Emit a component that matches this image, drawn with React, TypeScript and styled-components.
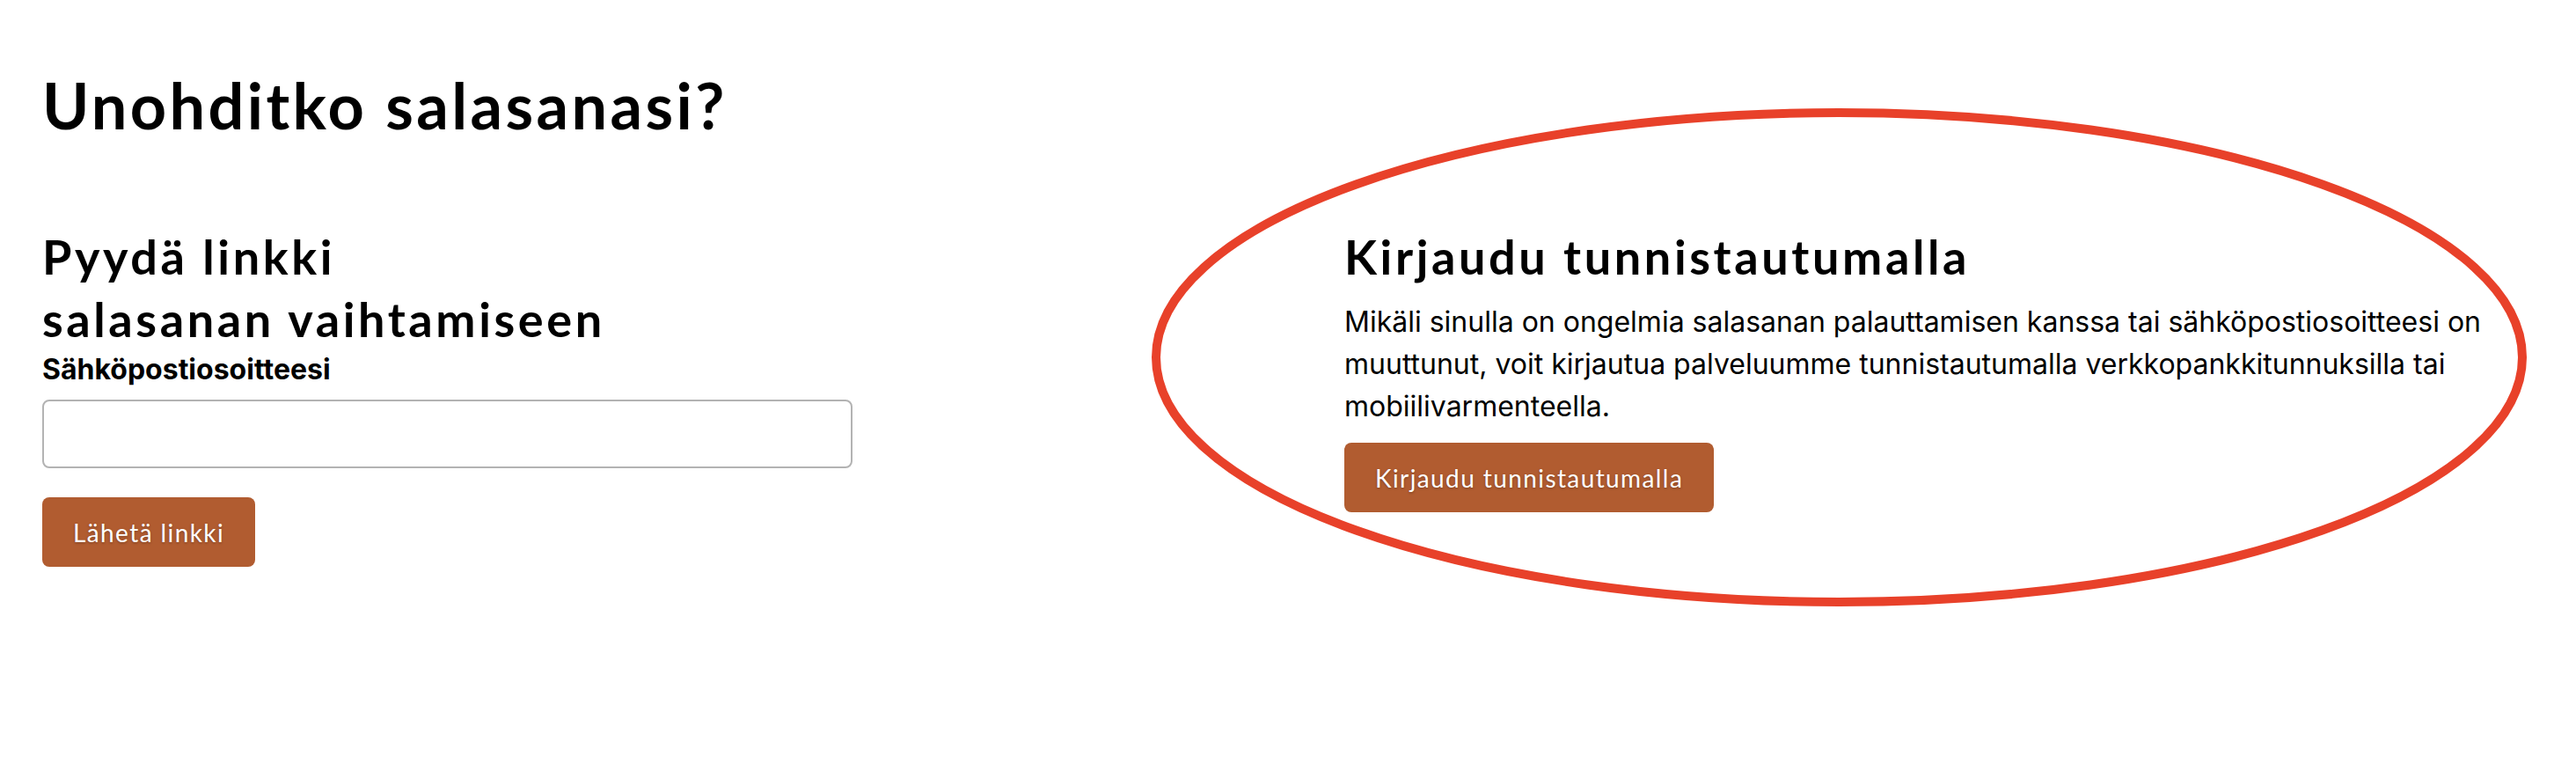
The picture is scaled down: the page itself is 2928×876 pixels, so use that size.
import React from 'react';
import styled, { createGlobalStyle } from 'styled-components';

const GlobalStyle = createGlobalStyle`
  html, body {
    margin: 0;
    padding: 0;
    background: #ffffff;
  }
  body {
    font-family: Inter, "Liberation Sans", sans-serif;
    color: #000000;
  }
  * {
    box-sizing: border-box;
  }
`;

const Page = styled.main`
  position: relative;
  width: 2928px;
  min-height: 876px;
  padding: 76px 48px 0 48px;
`;

const Title = styled.h1`
  margin: 0 0 94px 0;
  font-family: Lato, "Noto Sans", sans-serif;
  font-weight: 700;
  font-size: 72px;
  line-height: 1.2;
  letter-spacing: 3.4px;
`;

const Columns = styled.div`
  display: grid;
  grid-template-columns: 1fr 1fr;
  column-gap: 128px;
`;

const Column = styled.section`
  display: flex;
  flex-direction: column;
  align-items: flex-start;
`;

const Heading = styled.h2<{ $space?: number }>`
  margin: 0 0 ${({ $space }) => $space ?? 0}px 0;
  font-family: Lato, "Noto Sans", sans-serif;
  font-weight: 700;
  font-size: 54px;
  line-height: 71px;
  letter-spacing: 3.6px;
`;

const Form = styled.form`
  display: flex;
  flex-direction: column;
  align-items: flex-start;
`;

const Label = styled.label`
  font-family: Inter, "Liberation Sans", sans-serif;
  font-weight: 700;
  font-size: 32px;
  line-height: 44px;
  margin-bottom: 12px;
`;

const EmailInput = styled.input`
  width: 921px;
  height: 78px;
  border: 2px solid #b3b3b3;
  border-radius: 8px;
  background: #ffffff;
  padding: 0 20px;
  font-family: Inter, "Liberation Sans", sans-serif;
  font-size: 32px;
  margin-bottom: 33px;
  outline: none;
`;

const Text = styled.p`
  margin: 0 0 17px 0;
  font-family: Inter, "Liberation Sans", sans-serif;
  font-size: 32px;
  line-height: 48px;
`;

const Button = styled.button`
  height: 79px;
  padding: 0 35px;
  border: none;
  border-radius: 8px;
  background: #b15c30;
  color: #ffffff;
  font-family: Lato, "Noto Sans", sans-serif;
  font-size: 28px;
  font-weight: 400;
  letter-spacing: 1.4px;
  text-shadow: 0 1px 3px rgba(0, 0, 0, 0.3);
  cursor: pointer;
`;

const Highlight = styled.svg`
  position: absolute;
  left: 0;
  top: 0;
  pointer-events: none;
`;

export default function App() {
  return (
    <>
      <GlobalStyle />
      <Page>
        <Title>Unohditko salasanasi?</Title>
        <Columns>
          <Column>
            <Heading>
              Pyydä linkki
              <br />
              salasanan vaihtamiseen
            </Heading>
            <Form onSubmit={(e) => e.preventDefault()}>
              <Label htmlFor="email">Sähköpostiosoitteesi</Label>
              <EmailInput id="email" type="email" />
              <Button type="submit">Lähetä linkki</Button>
            </Form>
          </Column>
          <Column>
            <Heading $space={15}>Kirjaudu tunnistautumalla</Heading>
            <Text>
              Mikäli sinulla on ongelmia salasanan palauttamisen kanssa tai sähköpostiosoitteesi on
              muuttunut, voit kirjautua palveluumme tunnistautumalla verkkopankkitunnuksilla tai
              mobiilivarmenteella.
            </Text>
            <Button type="button">Kirjaudu tunnistautumalla</Button>
          </Column>
        </Columns>
        <Highlight width="2928" height="876" viewBox="0 0 2928 876">
          <ellipse cx="2090.5" cy="406" rx="776.5" ry="278" fill="none" stroke="#e8412a" strokeWidth="10" />
        </Highlight>
      </Page>
    </>
  );
}
